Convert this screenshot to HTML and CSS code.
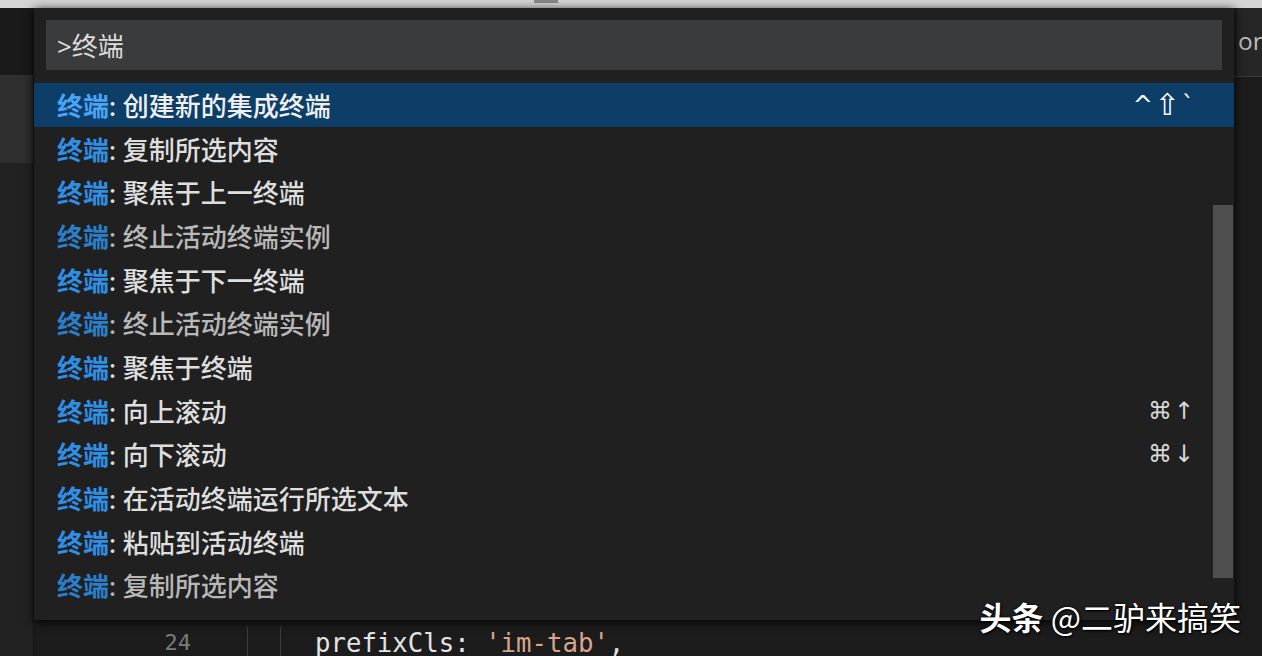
FILE: index.html
```html
<!DOCTYPE html>
<html lang="zh-CN">
<head>
<meta charset="utf-8">
<title>命令面板 - 终端</title>
<link rel="stylesheet" href="styles.css">
</head>
<body>
<div class="titlebar"><span class="title-mark"></span></div>
<div class="workbench">
  <div class="sidebar">
    <div class="sb-top"></div>
    <div class="sb-tab"></div>
    <div class="sb-rest"></div>
  </div>
  <div class="editor">
    <div class="tabs">
      <div class="tab active"></div>
      <div class="tab"><span class="tab-label">or</span></div>
    </div>
    <div class="code">
      <div class="line"><span class="ln">24</span><span class="indent"></span><span class="indent"></span><span class="tok">prefixCls: <span class="str">'im-tab'</span>,</span></div>
    </div>
  </div>
</div>

<div class="quick-open">
  <div class="input-wrap">
    <div class="input">&gt;终端</div>
  </div>
  <div class="list">
    <div class="row selected"><span class="hl">终端</span><span class="label">: 创建新的集成终端</span><span class="keys">^<span class="shift">⇧</span>`</span></div>
    <div class="row"><span class="hl">终端</span><span class="label">: 复制所选内容</span></div>
    <div class="row"><span class="hl">终端</span><span class="label">: 聚焦于上一终端</span></div>
    <div class="row dim"><span class="hl">终端</span><span class="label">: 终止活动终端实例</span></div>
    <div class="row"><span class="hl">终端</span><span class="label">: 聚焦于下一终端</span></div>
    <div class="row dim"><span class="hl">终端</span><span class="label">: 终止活动终端实例</span></div>
    <div class="row"><span class="hl">终端</span><span class="label">: 聚焦于终端</span></div>
    <div class="row"><span class="hl">终端</span><span class="label">: 向上滚动</span><span class="keys">⌘↑</span></div>
    <div class="row"><span class="hl">终端</span><span class="label">: 向下滚动</span><span class="keys">⌘↓</span></div>
    <div class="row"><span class="hl">终端</span><span class="label">: 在活动终端运行所选文本</span></div>
    <div class="row"><span class="hl">终端</span><span class="label">: 粘贴到活动终端</span></div>
    <div class="row dim"><span class="hl">终端</span><span class="label">: 复制所选内容</span></div>
    <div class="scrollbar"></div>
  </div>
</div>

<div class="watermark"><b>头条</b> @二驴来搞笑</div>
</body>
</html>
```

FILE: styles.css
```css
html, body {
  margin: 0;
  padding: 0;
}
body {
  width: 1262px;
  height: 656px;
  overflow: hidden;
  background: #1d1d1d;
  font-family: "Noto Sans", "Noto Sans CJK SC", sans-serif;
  color: #d4d4d4;
  position: relative;
}
.titlebar {
  height: 8px;
  background: #d6d6d6;
  display: flex;
  padding-left: 534px;
}
.title-mark {
  width: 24px;
  height: 3px;
  background: #555;
  opacity: 0.6;
}
.workbench {
  display: flex;
  height: 648px;
}
.sidebar {
  width: 33px;
  display: flex;
  flex-direction: column;
  border-right: 1px solid #151515;
}
.sb-top { height: 67px; background: #1a1a1a; }
.sb-tab { height: 88px; background: #2f2f2f; }
.sb-rest { flex: 1; background: #222222; }

.editor {
  flex: 1;
  display: flex;
  flex-direction: column;
  min-width: 0;
  background: #1c1c1c;
}
.tabs {
  height: 68px;
  display: flex;
  background: #262626;
  border-bottom: 1px solid #3a3a3a;
  overflow: hidden;
}
.tab {
  flex: none;
  display: flex;
  align-items: center;
  white-space: nowrap;
}
.tab.active {
  width: 1203px;
  background: #1e1e1e;
}
.tab-label {
  padding-left: 1px;
  font-family: "Open Sans", "Noto Sans", sans-serif;
  font-size: 24.5px;
  color: #bdbdbd;
  margin-top: -4px;
}
.code {
  flex: 1;
  display: flex;
  flex-direction: column;
  justify-content: flex-end;
  overflow: hidden;
}
.line {
  height: 33px;
  display: flex;
  align-items: center;
  flex: none;
  margin-bottom: -3px;
  font-family: "DejaVu Sans Mono", monospace;
  white-space: pre;
}
.ln {
  width: 157px;
  padding-right: 13px;
  text-align: right;
  font-size: 22px;
  color: #7a7a7a;
  flex: none;
  margin-right: 43px;
}
.indent {
  width: 32px;
  height: 100%;
  border-left: 1px solid #3d3d3d;
  flex: none;
}
.tok {
  padding-left: 2px;
  font-size: 25.7px;
  color: #e4e4e4;
}
.str { color: #d8a48c; }

.quick-open {
  position: absolute;
  top: 8px;
  left: 34px;
  width: 1200px;
  height: 612px;
  background: #202021;
  box-shadow: 0 2px 10px rgba(0, 0, 0, 0.9);
  display: flex;
  flex-direction: column;
}
.input-wrap {
  padding: 12px 12px 13px;
}
.input {
  height: 50px;
  background: #3a3b3d;
  display: flex;
  align-items: center;
  padding-left: 11px;
  font-size: 26px;
  color: #dcdcdc;
  box-sizing: border-box;
}
.list {
  position: relative;
  display: flex;
  flex-direction: column;
}
.row {
  height: 43.7px;
  display: flex;
  align-items: center;
  padding: 0 38px 0 23px;
  font-size: 26px;
  white-space: nowrap;
  flex: none;
}
.row.selected {
  background: #0d3e68;
}
.hl {
  color: #2e8fe4;
  font-weight: 700;
}
.row.selected .hl {
  color: #4aa4f5;
}
.label {
  color: #dedede;
  flex: 1;
  font-weight: 500;
}
.row.selected .label { color: #f0f0f0; }
.row.dim .label { color: #b8b8b8; }
.row.dim .hl { color: #2a7fc8; }
.keys {
  font-family: "DejaVu Sans", sans-serif;
  font-size: 24px;
  color: #d8d8d8;
  letter-spacing: 2px;
  display: flex;
  align-items: center;
}
.shift {
  font-size: 30px;
  line-height: 1;
}
.row.selected .keys { color: #ffffff; }
.scrollbar {
  position: absolute;
  right: 1px;
  top: 122px;
  width: 20px;
  height: 373px;
  background: #4f4f50;
}
.watermark {
  position: absolute;
  right: 21px;
  bottom: 17px;
  font-family: "Noto Sans CJK SC", sans-serif;
  font-size: 32px;
  color: #ffffff;
  text-shadow: 1px 1px 2px #000, 0 0 3px #000;
  white-space: nowrap;
}
.watermark b { font-weight: 700; }
```
